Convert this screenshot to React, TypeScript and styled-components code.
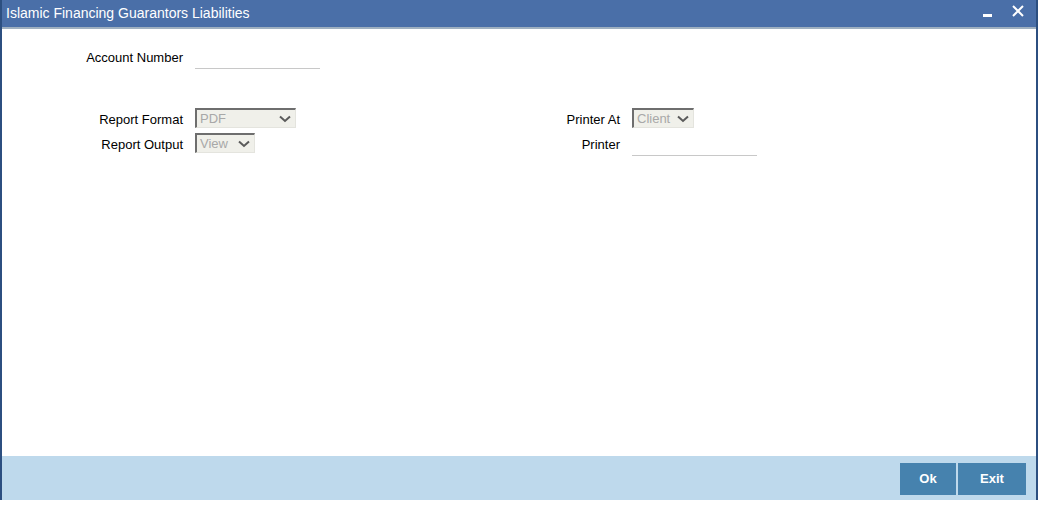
import React from "react";
import styled, { createGlobalStyle } from "styled-components";

const Global = createGlobalStyle`
  html, body { margin: 0; padding: 0; background: #ffffff; }
  body { font-family: "Liberation Sans", Arial, sans-serif; }
`;

const Window = styled.div`
  width: 1038px;
  height: 500px;
  box-sizing: border-box;
  border-left: 2px solid #2c4f80;
  border-right: 2px solid #2c4f80;
  display: flex;
  flex-direction: column;
  background: #ffffff;
`;

const TitleBar = styled.div`
  height: 27px;
  background: #4a6fa8;
  border-bottom: 2px solid #9fb0c0;
  display: flex;
  align-items: center;
  justify-content: space-between;
  padding: 0 12px 0 4px;
  color: #ffffff;
`;

const Title = styled.span`
  font-size: 14px;
  margin-top: -2px;
`;

const Controls = styled.div`
  display: flex;
  align-items: center;
  gap: 18px;
  margin-top: -6px;
`;

const IconBtn = styled.span`
  display: inline-flex;
  width: 12px;
  height: 12px;
  align-items: center;
  justify-content: center;
`;

const Body = styled.div`
  flex: 1;
  padding-top: 19px;
  display: flex;
  flex-direction: column;
`;

const Row = styled.div<{ $h?: number }>`
  display: flex;
  align-items: center;
  height: ${(p) => p.$h ?? 20}px;
`;

const Columns = styled.div`
  display: flex;
  margin-top: 40px;
`;

const Column = styled.div<{ $w: number }>`
  width: ${(p) => p.$w}px;
  display: flex;
  flex-direction: column;
  gap: 5px;
`;

const Label = styled.label<{ $w: number; $dy?: number }>`
  width: ${(p) => p.$w}px;
  text-align: right;
  font-size: 13px;
  color: #000000;
  padding-right: 12px;
  margin-top: ${(p) => p.$dy ?? 0}px;
  box-sizing: border-box;
`;

const TextInput = styled.div<{ $w: number; $h?: number }>`
  width: ${(p) => p.$w}px;
  height: ${(p) => p.$h ?? 21}px;
  box-sizing: border-box;
  border-bottom: 1px solid #c8c8c8;
  align-self: flex-start;
`;

const Select = styled.div<{ $w: number }>`
  width: ${(p) => p.$w}px;
  height: 20px;
  box-sizing: border-box;
  background: #f0f0ea;
  border-top: 2px solid #6e6e6e;
  border-left: 2px solid #6e6e6e;
  border-right: 1px solid #e4e4de;
  border-bottom: 1px solid #e4e4de;
  display: flex;
  align-items: center;
  justify-content: space-between;
  padding: 0 4px 0 3px;
  font-size: 13px;
  color: #a8a8a8;
`;

const Footer = styled.div`
  height: 44px;
  background: #bed9ec;
  display: flex;
  justify-content: flex-end;
  align-items: center;
  padding-right: 10px;
  gap: 2px;
`;

const Button = styled.button<{ $w: number }>`
  width: ${(p) => p.$w}px;
  height: 32px;
  border: none;
  background: #4682ae;
  color: #ffffff;
  font-family: "Liberation Sans", Arial, sans-serif;
  font-size: 13px;
  font-weight: bold;
  padding: 0;
  margin-top: 1px;
`;

const Chevron = () => (
  <svg width="12" height="8" viewBox="0 0 12 8">
    <path d="M1 1.5 L6 6 L11 1.5" stroke="#5a5a5a" strokeWidth="2" fill="none" />
  </svg>
);

export default function App() {
  return (
    <>
      <Global />
      <Window>
        <TitleBar>
          <Title>Islamic Financing Guarantors Liabilities</Title>
          <Controls>
            <IconBtn>
              <svg width="10" height="12" viewBox="0 0 10 12">
                <rect x="0" y="9" width="9" height="3" fill="#ffffff" />
              </svg>
            </IconBtn>
            <IconBtn>
              <svg width="12" height="12" viewBox="0 0 12 12">
                <path d="M1 1 L11 11 M11 1 L1 11" stroke="#ffffff" strokeWidth="2" />
              </svg>
            </IconBtn>
          </Controls>
        </TitleBar>
        <Body>
          <Row>
            <Label $w={193} $dy={-2}>Account Number</Label>
            <TextInput $w={125} />
          </Row>
          <Columns>
            <Column $w={437}>
              <Row>
                <Label $w={193} $dy={2}>Report Format</Label>
                <Select $w={101}>
                  <span>PDF</span>
                  <Chevron />
                </Select>
              </Row>
              <Row>
                <Label $w={193} $dy={2}>Report Output</Label>
                <Select $w={60}>
                  <span>View</span>
                  <Chevron />
                </Select>
              </Row>
            </Column>
            <Column $w={400}>
              <Row>
                <Label $w={193} $dy={2}>Printer At</Label>
                <Select $w={62}>
                  <span>Client</span>
                  <Chevron />
                </Select>
              </Row>
              <Row>
                <Label $w={193} $dy={2}>Printer</Label>
                <TextInput $w={125} $h={23} />
              </Row>
            </Column>
          </Columns>
        </Body>
        <Footer>
          <Button $w={56}>Ok</Button>
          <Button $w={68}>Exit</Button>
        </Footer>
      </Window>
    </>
  );
}
